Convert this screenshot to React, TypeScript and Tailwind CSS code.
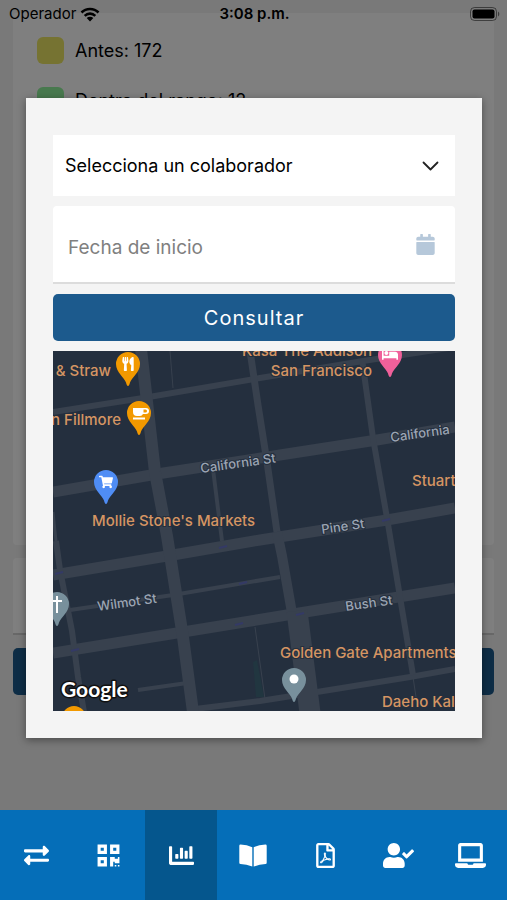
import type { ReactNode } from "react";
import {
  FaBed,
  FaCalendar,
  FaChartBar,
  FaCoffee,
  FaExchangeAlt,
  FaLaptop,
  FaQrcode,
  FaRegFilePdf,
  FaShoppingCart,
  FaUserCheck,
  FaUtensils,
} from "react-icons/fa";

function BookIcon() {
  return (
    <svg width="28" height="23" viewBox="0 0 28 23" fill="currentColor">
      <path d="M1.500 0.500 Q8 0.700 13.300 3.200 V22.500 Q7.500 20.200 1.500 20 Q0.300 20 0.300 18.800 V1.700 Q0.300 0.500 1.500 0.500 Z" />
      <path d="M26.500 0.500 Q20 0.700 14.700 3.200 V22.500 Q20.500 20.200 26.500 20 Q27.700 20 27.700 18.800 V1.700 Q27.700 0.500 26.500 0.500 Z" />
    </svg>
  );
}

const legend = [
  { label: "Antes: 172", color: "bg-[#ece664]" },
  { label: "Dentro del rango: 12", color: "bg-[#90f29c]" },
];

const tabs = [
  { name: "Movimientos", icon: <FaExchangeAlt size={25} /> },
  { name: "Código QR", icon: <FaQrcode size={25} /> },
  { name: "Estadísticas", icon: <FaChartBar size={25} />, active: true },
  { name: "Manual", icon: <BookIcon /> },
  { name: "Reportes PDF", icon: <FaRegFilePdf size={25} /> },
  { name: "Asistencia", icon: <FaUserCheck size={31} /> },
  { name: "Equipo", icon: <FaLaptop size={31} /> },
];

// [path, stroke width]
const roads: [string, number][] = [
  ["M0 61 L90 47 L207 27 L310 10 L402 -4", 6],
  ["M0 141 L104 123 L227 104 L324 89 L402 76", 11],
  ["M0 224 L114 205 L207 189 L334 169 L402 157", 11],
  ["M17 259 L120 244 L227 226", 4],
  ["M0 302 L130 281 L240 263 L402 237", 11],
  ["M142 358 L207 350 L264 341 L357 326 L402 318", 6],
  ["M85 339 L134 332", 4],
  ["M88 -2 L102 121 L114 185 L130 286 L140 361", 12],
  ["M117 0 L120 37", 1],
  ["M197 0 L205 54 L214 111 L224 181", 7],
  ["M224 181 L229 205 L239 262", 10],
  ["M244 260 L257 362", 21],
  ["M309 8 L320 87 L334 167 L347 246 L360 324", 6],
  ["M360 326 L363 346", 1],
  ["M160 118 L169 190", 4],
  ["M0 161 L4 200", 3],
  ["M3 190 L7 219 L19 280 L25 326 L31 361", 6],
  ["M202 276 L212 348", 1],
];

// tiny direction marks at the crossings
const marks = [
  [6, 222],
  [170, 196],
  [190, 232],
  [333, 169],
  [22, 299],
  [186, 273],
  [247, 263],
];

const places = [
  { text: "& Straw", x: 58, y: 25, end: true },
  { text: "n Fillmore", x: 68, y: 74, end: true },
  { text: "Kasa The Addison", x: 319, y: 5, end: true },
  { text: "San Francisco", x: 319, y: 25, end: true },
  { text: "Mollie Stone's Markets", x: 39, y: 175 },
  { text: "Stuart", x: 359, y: 135 },
  { text: "Golden Gate Apartments", x: 227, y: 307 },
  { text: "Daeho Kal", x: 329, y: 356 },
];

const streets = [
  { text: "California St", x: 148, y: 122 },
  { text: "California", x: 338, y: 91 },
  { text: "Pine St", x: 269, y: 183 },
  { text: "Wilmot St", x: 45, y: 260 },
  { text: "Bush St", x: 293, y: 260 },
];

function Pin({ x, y, color, children }: { x: number; y: number; color: string; children?: ReactNode }) {
  return (
    <g transform={`translate(${x} ${y})`}>
      <path
        d="M0 22 C-1 22 -1.4 20.6 -2 18.6 C-3.6 13.4 -12 8.6 -12 0 A12 12 0 0 1 12 0 C12 8.6 3.6 13.4 2 18.6 C1.4 20.6 1 22 0 22 Z"
        fill={color}
      />
      {children}
    </g>
  );
}

function StreetMap() {
  return (
    <svg
      viewBox="0 0 402 360"
      preserveAspectRatio="xMidYMid slice"
      className="block h-[360px] w-full bg-[#242f3e]"
      role="img"
      aria-label="Mapa"
    >
      <path d="M200 311 L204 309 L211 346 L203 346 Z" fill="#213640" />
      <g fill="none" stroke="#38414e">
        {roads.map(([d, width]) => (
          <path key={d} d={d} strokeWidth={width} />
        ))}
      </g>
      {marks.map(([x, y]) => (
        <path key={`${x}-${y}`} d={`M${x - 4} ${y + 1} l8 -2`} stroke="#343a66" strokeWidth={2} />
      ))}

      <g
        fill="#9ca5b3"
        fontSize={13}
        stroke="#242f3e"
        strokeWidth={2}
        paintOrder="stroke"
        className="font-medium"
      >
        {streets.map((s) => (
          <text key={s.text} transform={`translate(${s.x} ${s.y}) rotate(-8)`}>
            {s.text}
          </text>
        ))}
      </g>
      <g
        fill="#d59563"
        fontSize={15}
        stroke="#242f3e"
        strokeWidth={2}
        paintOrder="stroke"
        className="font-medium"
      >
        {places.map((p) => (
          <text key={p.text} x={p.x} y={p.y} textAnchor={p.end ? "end" : "start"}>
            {p.text}
          </text>
        ))}
      </g>

      <Pin x={75} y={13} color="#f29900">
        <FaUtensils x={-7} y={-7} size={14} color="#fff" />
      </Pin>
      <Pin x={86} y={62} color="#f29900">
        <path
          d="M-6 -5 H7 A3 3 0 0 1 7 1 H4 Q3 3 1 3 H-2 Q-6 3 -6 -1 Z M4.500 -3.500 V-0.500 H6.500 A1.500 1.500 0 0 0 6.500 -3.500 Z"
          fill="#fff"
          fillRule="evenodd"
        />
        <path d="M-6 4.500 H6 V6.500 H-6 Z" fill="#fff" />
      </Pin>
      <Pin x={53} y={131} color="#4f8df5">
        <FaShoppingCart x={-7} y={-7} size={14} color="#fff" />
      </Pin>
      <Pin x={337} y={4} color="#f0609a">
        <FaBed x={-8} y={-8} size={16} color="#fff" />
      </Pin>
      <Pin x={4} y={253} color="#78909c">
        <path
          d="M-1 -8 H1 V-4 H5 V-2 H1 V9 H-1 V-2 H-5 V-4 H-1 Z"
          fill="#fff"
        />
      </Pin>
      <Pin x={241} y={329} color="#78909c">
        <circle r={4.5} cy={-1} fill="#fff" />
      </Pin>
      <Pin x={21} y={367} color="#f29900">
        <FaCoffee x={-7} y={-7} size={14} color="#fff" />
      </Pin>

      <text
        x={8}
        y={346}
        fill="#fff"
        fontSize={21}
        stroke="#111"
        strokeWidth={3}
        strokeLinejoin="round"
        paintOrder="stroke"
        className="font-['Lato',sans-serif] font-bold"
      >
        Google
      </text>
    </svg>
  );
}

function StatusBar() {
  return (
    <header className="absolute inset-x-0 top-0 grid h-7 grid-cols-3 items-center pr-[7px] pl-[9px] text-[15px]">
      <div className="flex items-center gap-1">
        <span>Operador</span>
        <svg width="20" height="15" viewBox="0 0 20 15" fill="none" stroke="#000" strokeWidth="2.6">
          <path d="M1.500 5.500 A12 12 0 0 1 18.500 5.500" />
          <path d="M4.700 8.800 A7.500 7.500 0 0 1 15.300 8.800" />
          <path d="M10 14.500 L6.700 11 A4.700 4.700 0 0 1 13.300 11 Z" fill="#000" stroke="none" />
        </svg>
      </div>
      <span className="text-center font-semibold">3:08 p.m.</span>
      <svg className="justify-self-end" width="30" height="14" viewBox="0 0 30 14">
        <rect x="0.500" y="0.500" width="26" height="13" rx="4" fill="none" stroke="#000" strokeOpacity="0.5" />
        <rect x="2.500" y="2.500" width="22" height="9" rx="2" fill="#000" />
        <path d="M28 4.500 A3 3 0 0 1 28 9.500 Z" fill="#000" fillOpacity="0.5" />
      </svg>
    </header>
  );
}

function StatsPage() {
  return (
    <div className="px-[13px] pt-[13px]">
      <section className="h-[532px] rounded bg-white px-6 pt-6">
        <ul className="flex flex-col gap-[23px]">
          {legend.map((item) => (
            <li key={item.label} className="flex items-center gap-[11px]">
              <span className={`size-[27px] rounded-md ${item.color}`} />
              <span className="text-lg leading-6">{item.label}</span>
            </li>
          ))}
        </ul>
      </section>
      <div className="mt-[13px] h-[77px] rounded-t border-b-2 border-[#d0d0d0] bg-white" />
      <div className="mt-[13px] h-[47px] rounded-[5px] bg-[#1c5a8d]" />
    </div>
  );
}

function QueryDialog() {
  return (
    <div
      role="dialog"
      aria-label="Consulta de colaborador"
      className="mt-[98px] mr-[25px] ml-[26px] bg-[#f4f4f4] px-[27px] pt-[37px] pb-[27px] shadow-[0_2px_8px_rgba(0,0,0,0.4)]"
    >
      <form className="flex flex-col gap-[10px]" onSubmit={(e) => e.preventDefault()}>
        <div className="relative">
          <select
            aria-label="Colaborador"
            className="block h-[61px] w-full appearance-none bg-white pr-12 pl-3 text-lg text-black"
          >
            <option>Selecciona un colaborador</option>
          </select>
          <svg
            className="pointer-events-none absolute top-6 right-4"
            width="17"
            height="14"
            viewBox="0 0 17 14"
            fill="none"
            stroke="#222"
            strokeWidth="1.8"
            strokeLinecap="round"
            strokeLinejoin="round"
          >
            <path d="M1.500 3.500 L8.500 10.500 L15.500 3.500" />
          </svg>
        </div>
        <div className="flex h-[78px] items-center rounded-t border-b-2 border-[#dcdcdc] bg-white pr-[19px] pl-[15px]">
          <input
            type="text"
            aria-label="Fecha de inicio"
            placeholder="Fecha de inicio"
            className="min-w-0 flex-1 pt-2 text-[19px] outline-none placeholder:text-[#808080]"
          />
          <FaCalendar size={21} color="#b6c8da" />
        </div>
        <button type="submit" className="h-[47px] rounded-[5px] bg-[#1c5a8d] text-xl tracking-wider text-white">
          Consultar
        </button>
        <StreetMap />
      </form>
    </div>
  );
}

export default function App() {
  return (
    <div className="flex min-h-screen flex-col bg-[#f2f2f2] font-['Inter',sans-serif] text-black">
      <main className="relative flex-1">
        <StatsPage />
        <StatusBar />
        <div className="absolute inset-0 bg-black/50">
          <QueryDialog />
        </div>
      </main>

      <nav className="flex h-[90px] bg-[#056eb8] text-white">
        {tabs.map((tab) => (
          <button
            key={tab.name}
            type="button"
            aria-label={tab.name}
            className={`flex flex-1 items-center justify-center ${tab.active ? "bg-[#05568d]" : ""}`}
          >
            {tab.icon}
          </button>
        ))}
      </nav>
    </div>
  );
}
